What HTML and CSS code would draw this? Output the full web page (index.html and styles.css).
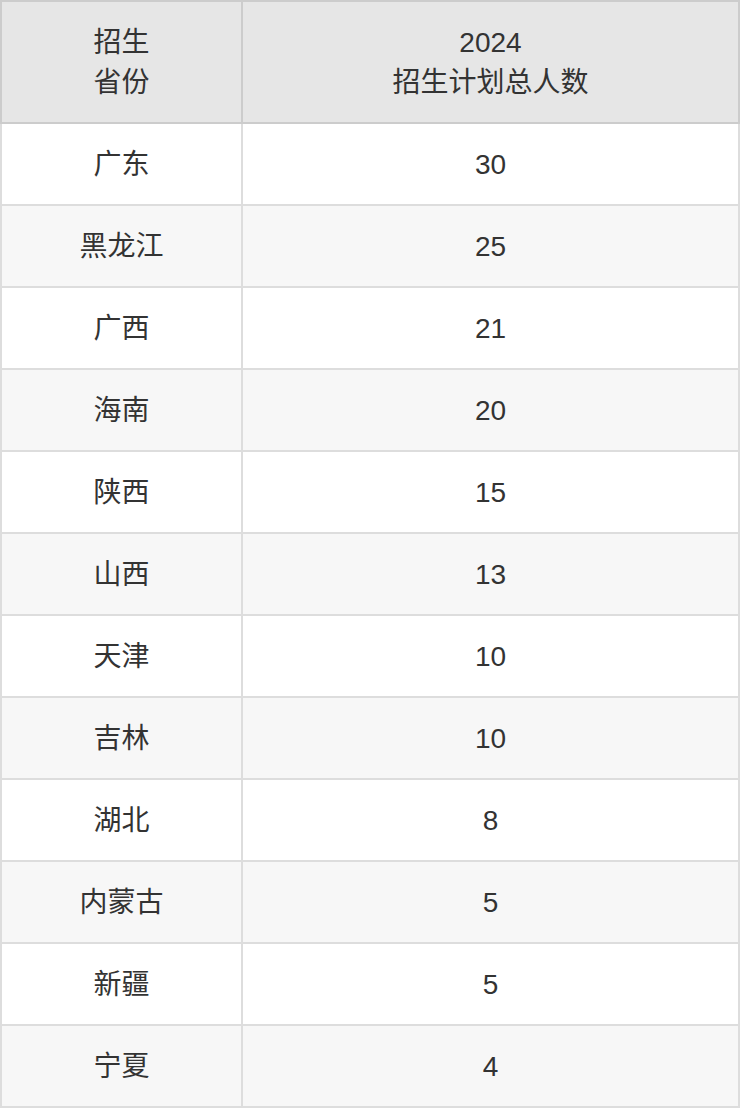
FILE: index.html
```html
<!DOCTYPE html>
<html lang="zh-CN">
<head>
<meta charset="utf-8">
<link rel="stylesheet" href="styles.css">
</head>
<body>
<table class="plan">
  <colgroup><col class="c1"><col class="c2"></colgroup>
  <thead>
    <tr><th>招生<br>省份</th><th>2024<br>招生计划总人数</th></tr>
  </thead>
  <tbody>
    <tr><td>广东</td><td>30</td></tr>
    <tr><td>黑龙江</td><td>25</td></tr>
    <tr><td>广西</td><td>21</td></tr>
    <tr><td>海南</td><td>20</td></tr>
    <tr><td>陕西</td><td>15</td></tr>
    <tr><td>山西</td><td>13</td></tr>
    <tr><td>天津</td><td>10</td></tr>
    <tr><td>吉林</td><td>10</td></tr>
    <tr><td>湖北</td><td>8</td></tr>
    <tr><td>内蒙古</td><td>5</td></tr>
    <tr><td>新疆</td><td>5</td></tr>
    <tr><td>宁夏</td><td>4</td></tr>
  </tbody>
</table>
</body>
</html>
```
FILE: styles.css
```css
html, body {
  margin: 0;
  padding: 0;
  background: #ffffff;
}
.plan {
  width: 740px;
  border-collapse: collapse;
  table-layout: fixed;
  font-family: "Liberation Sans", "Noto Sans CJK SC", sans-serif;
  font-size: 28px;
  line-height: 40px;
  color: #333333;
}
.c1 { width: 241px; }
.plan th, .plan td {
  text-align: center;
  font-weight: normal;
  padding: 0;
}
.plan th {
  background: #e6e6e6;
  border: 2px solid #cccccc;
  height: 119px;
  padding-top: 1px;
}
.plan td {
  border: 2px solid #dddddd;
  height: 79px;
  padding-top: 1px;
}
.plan tbody tr:nth-child(even) td {
  background: #f7f7f7;
}
```
